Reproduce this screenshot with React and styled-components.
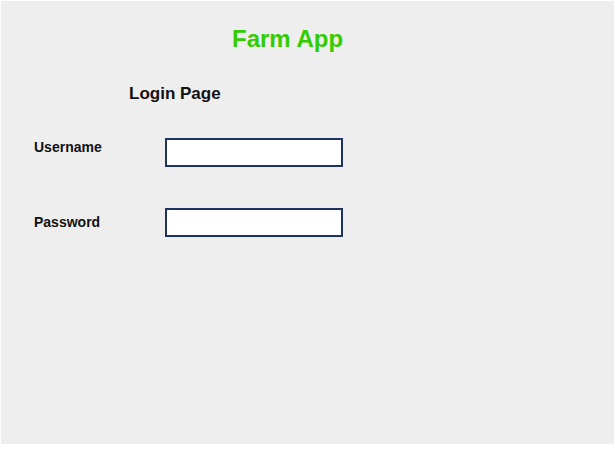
import React from 'react';
import styled, { createGlobalStyle } from 'styled-components';

const GlobalStyle = createGlobalStyle`
  html, body {
    margin: 0;
    background: #ffffff;
  }
  body {
    padding: 1px;
    font-family: "Liberation Sans", Arial, sans-serif;
  }
`;

const Panel = styled.div`
  display: flex;
  flex-direction: column;
  width: 613px;
  height: 443px;
  box-sizing: border-box;
  padding: 24px 33px 0;
  background: #eeeeee;
`;

const Title = styled.h1`
  margin: 0 0 0 198px;
  font-size: 24px;
  line-height: 28px;
  font-weight: bold;
  color: #33cc00;
`;

const Subtitle = styled.h2`
  margin: 31px 0 0 95px;
  font-size: 17px;
  line-height: 20px;
  font-weight: bold;
  color: #111111;
`;

const Form = styled.form`
  display: flex;
  flex-direction: column;
  gap: 41px;
  margin-top: 34px;
`;

const Row = styled.div`
  display: flex;
  align-items: flex-start;
`;

const Label = styled.label`
  width: 131px;
  margin-top: ${(p) => p.$offset}px;
  font-size: 14px;
  line-height: 16px;
  font-weight: bold;
  color: #111111;
`;

const Input = styled.input`
  width: 178px;
  height: 29px;
  box-sizing: border-box;
  margin: 0;
  padding: 0 4px;
  border: 2px solid #1f3264;
  background: #ffffff;
  outline: none;
  font-family: inherit;
  font-size: 14px;
`;

const App = () => (
  <>
    <GlobalStyle />
    <Panel>
      <Title>Farm App</Title>
      <Subtitle>Login Page</Subtitle>
      <Form>
        <Row>
          <Label htmlFor="username" $offset={1}>Username</Label>
          <Input id="username" type="text" />
        </Row>
        <Row>
          <Label htmlFor="password" $offset={6}>Password</Label>
          <Input id="password" type="password" />
        </Row>
      </Form>
    </Panel>
  </>
);

export default App;
